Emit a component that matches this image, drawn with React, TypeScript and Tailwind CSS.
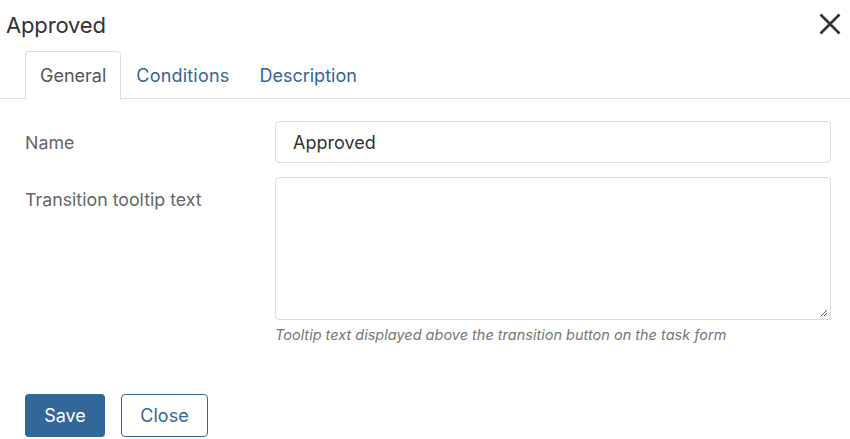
import React from "react";

export default function App() {
  return (
    <div className="w-[850px] h-[439px] bg-white overflow-hidden" style={{ fontFamily: "Inter, 'Liberation Sans', sans-serif" }}>
      <div className="flex items-center justify-between h-[51px] pl-[6px] pr-[8px]">
        <div className="text-[22px] text-[#333] leading-none -mt-[2px] tracking-[-0.15px]">Approved</div>
        <svg width="24" height="24" viewBox="0 0 24 24" className="-mt-[3px]">
          <path d="M2.5 2.5 L21.5 21.5 M21.5 2.5 L2.5 21.5" stroke="#333" strokeWidth="2.6" strokeLinecap="butt" />
        </svg>
      </div>
      <div className="flex border-b border-[#dddddd] pl-[25px] h-[48px]">
        <div className="h-[49px] px-[14px] border border-[#dddddd] border-b-white rounded-t-[4px] flex items-center text-[18px] text-[#555] bg-white">General</div>
        <div className="h-[48px] px-[15px] flex items-center text-[18px] text-[#336699] tracking-[0.2px]">Conditions</div>
        <div className="h-[48px] px-[15px] flex items-center text-[18px] text-[#336699]">Description</div>
      </div>
      <div className="pt-[22px] pl-[25px] pr-[19px]">
        <div className="flex">
          <div className="w-[250px] text-[17.8px] text-[#666] pt-[9px]">Name</div>
          <div className="flex-1 h-[42px] border border-[#dddddd] rounded-[4px] flex items-center px-[17px] text-[18px] text-[#333]">Approved</div>
        </div>
        <div className="flex mt-[14px]">
          <div className="w-[250px] text-[17.8px] text-[#666] pt-[10px]">Transition tooltip text</div>
          <div className="flex-1">
            <div className="relative h-[143px] border border-[#dddddd] rounded-[4px]">
              <svg width="8" height="8" viewBox="0 0 8 8" className="absolute right-[2px] bottom-[2px]">
                <path d="M7 1 L1 7 M7 4 L4 7" stroke="#555" strokeWidth="1" />
              </svg>
            </div>
            <div className="mt-[4px] text-[14.5px] italic text-[#777]">Tooltip text displayed above the transition button on the task form</div>
          </div>
        </div>
        <div className="flex gap-[16px] mt-[48px]">
          <button className="w-[80px] h-[43px] rounded-[4px] bg-[#336699] text-white text-[18px]">Save</button>
          <button className="w-[87px] h-[43px] rounded-[4px] border border-[#336699] bg-white text-[#336699] text-[18px]">Close</button>
        </div>
      </div>
    </div>
  );
}
